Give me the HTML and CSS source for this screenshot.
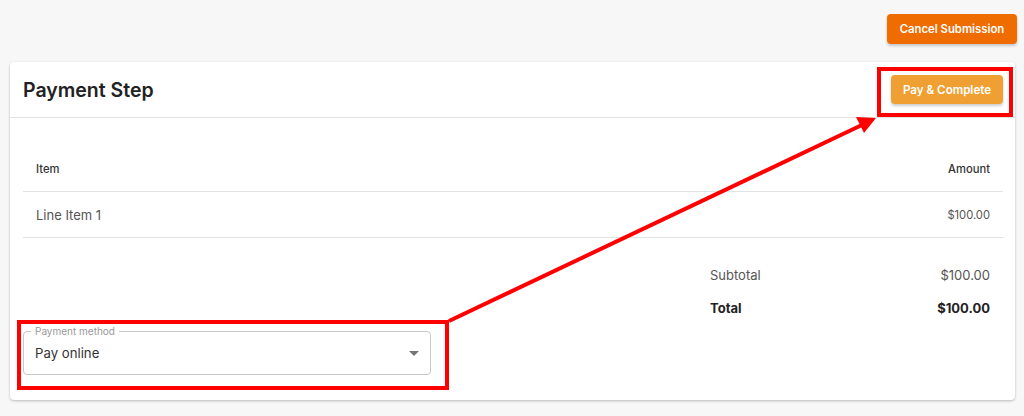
FILE: index.html
```html
<!DOCTYPE html>
<html>
<head>
<meta charset="utf-8">
<link rel="stylesheet" href="styles.css">
</head>
<body>
<div class="page">
  <div class="topbar">
    <button class="btn btn-cancel">Cancel Submission</button>
  </div>
  <div class="card">
    <div class="card-header">
      <h1 class="title">Payment Step</h1>
      <button class="btn btn-pay">Pay &amp; Complete</button>
    </div>
    <div class="card-body">
      <div class="table">
        <div class="row head">
          <span>Item</span>
          <span>Amount</span>
        </div>
        <div class="row item">
          <span class="item-name">Line Item 1</span>
          <span class="item-amount">$100.00</span>
        </div>
      </div>
      <div class="bottom">
        <div class="select">
          <span class="select-label">Payment method</span>
          <span class="select-value">Pay online</span>
          <svg class="caret" width="10" height="5" viewBox="0 0 10 5"><path d="M0 0 L10 0 L5 5 Z" fill="#757575"/></svg>
        </div>
        <div class="totals">
          <div class="trow sub"><span>Subtotal</span><span>$100.00</span></div>
          <div class="trow total"><span>Total</span><span>$100.00</span></div>
        </div>
      </div>
    </div>
  </div>
</div>
<svg class="annot" width="1024" height="416" viewBox="0 0 1024 416">
  <rect x="879" y="69" width="132" height="46" fill="none" stroke="#f00" stroke-width="4"/>
  <rect x="19" y="322" width="428" height="66" fill="none" stroke="#f00" stroke-width="4"/>
  <line x1="449" y1="321" x2="864" y2="124" stroke="#f00" stroke-width="4"/>
  <polygon points="876,118 856,117 864,133" fill="#f00"/>
</svg>
</body>
</html>
```
FILE: styles.css
```css
html, body {
  margin: 0;
  padding: 0;
}
body {
  background: #f7f7f7;
  font-family: Inter, "Noto Sans", sans-serif;
  color: #333;
  width: 1024px;
  height: 416px;
  overflow: hidden;
  position: relative;
}
.page {
  padding: 14px 8px 0 10px;
}
.topbar {
  display: flex;
  justify-content: flex-end;
  height: 30px;
  margin-bottom: 18px;
}
.btn {
  border: none;
  border-radius: 4px;
  color: #fff;
  font-family: Inter, sans-serif;
  font-size: 11.3px;
  font-weight: 600;
  cursor: pointer;
  box-shadow: 0 2px 3px rgba(0,0,0,0.2);
  padding: 0;
}
.btn-cancel {
  background: #ef6c00;
  width: 130px;
  height: 30px;
  margin-right: -1px;
}
.btn-pay {
  background: #f0a033;
  width: 112px;
  height: 29px;
  font-size: 11.6px;
}
.card {
  background: #fff;
  width: 1005px;
  border-radius: 4px;
  box-shadow: 0 1px 3px rgba(0,0,0,0.18), 0 1px 2px rgba(0,0,0,0.08);
  height: 338px;
}
.card-header {
  display: flex;
  align-items: center;
  justify-content: space-between;
  height: 55px;
  padding: 0 12px 0 13px;
  border-bottom: 1px solid #e3e3e3;
}
.title {
  margin: 0;
  font-size: 19.5px;
  font-weight: 600;
  color: #222;
}
.card-body {
  padding: 28px 12px 0 13px;
}
.row {
  display: flex;
  justify-content: space-between;
  align-items: center;
  height: 45px;
  padding: 0 13px;
  border-bottom: 1px solid #e3e3e3;
}
.head {
  font-size: 11.2px;
  font-weight: 500;
  color: #333;
}
.item-name {
  font-size: 13px;
  color: #555;
}
.item-amount {
  font-size: 11.2px;
  color: #555;
}
.bottom {
  display: flex;
  justify-content: space-between;
  align-items: flex-end;
  padding-top: 20px;
}
.select {
  position: relative;
  width: 408px;
  height: 44px;
  box-sizing: border-box;
  border: 1px solid #c8c8c8;
  border-radius: 4px;
  display: flex;
  align-items: center;
  padding-left: 11px;
}
.select-label {
  position: absolute;
  top: -7px;
  left: 7px;
  background: #fff;
  padding: 0 4px;
  font-size: 10px;
  color: #999;
  line-height: 12px;
}
.select-value {
  font-size: 13.2px;
  color: #333;
  flex: 1;
}
.caret {
  margin-right: 11px;
}
.totals {
  width: 306px;
  margin-bottom: 51px;
}
.trow {
  display: flex;
  justify-content: space-between;
  align-items: center;
  height: 33px;
  padding: 0 13px;
  font-size: 13px;
}
.sub {
  color: #555;
}
.total {
  font-weight: 700;
  color: #222;
}
.annot {
  position: absolute;
  top: 0;
  left: 0;
  pointer-events: none;
}
```
